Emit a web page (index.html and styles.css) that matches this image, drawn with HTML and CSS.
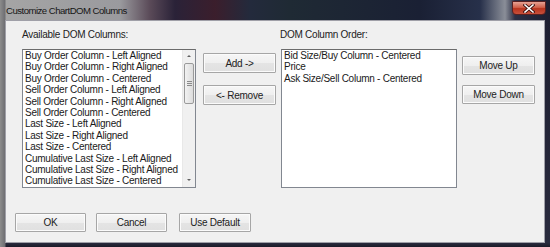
FILE: index.html
```html
<!DOCTYPE html>
<html>
<head>
<meta charset="utf-8">
<link rel="stylesheet" href="styles.css">
</head>
<body>
<div class="window">
  <div class="titlebar">
    <span class="title">Customize ChartDOM Columns</span>
    <div class="close"><svg width="12" height="9" viewBox="0 0 12 9"><path d="M2 1 L10 8 M10 1 L2 8" stroke="#3a1010" stroke-width="3.2" stroke-linecap="square"/><path d="M2 1 L10 8 M10 1 L2 8" stroke="#ffffff" stroke-width="1.6" stroke-linecap="square"/></svg></div>
  </div>
  <div class="client">
    <div class="top">
      <div class="col">
        <div class="label">Available DOM Columns:</div>
        <div class="listbox">
          <ul class="items">
            <li>Buy Order Column - Left Aligned</li>
            <li>Buy Order Column - Right Aligned</li>
            <li>Buy Order Column - Centered</li>
            <li>Sell Order Column - Left Aligned</li>
            <li>Sell Order Column - Right Aligned</li>
            <li>Sell Order Column - Centered</li>
            <li>Last Size - Left Aligned</li>
            <li>Last Size - Right Aligned</li>
            <li>Last Size - Centered</li>
            <li>Cumulative Last Size - Left Aligned</li>
            <li>Cumulative Last Size - Right Aligned</li>
            <li>Cumulative Last Size - Centered</li>
          </ul>
          <div class="scrollbar">
            <div class="arrow up"></div>
            <div class="track"><div class="thumb"><span class="grip"></span></div></div>
            <div class="arrow down"></div>
          </div>
        </div>
      </div>
      <div class="mid">
        <button class="btn">Add -&gt;</button>
        <button class="btn">&lt;- Remove</button>
      </div>
      <div class="col col-right">
        <div class="label">DOM Column Order:</div>
        <div class="listbox wide">
          <ul class="items">
            <li>Bid Size/Buy Column - Centered</li>
            <li>Price</li>
            <li>Ask Size/Sell Column - Centered</li>
          </ul>
        </div>
      </div>
      <div class="side">
        <button class="btn small">Move Up</button>
        <button class="btn small">Move Down</button>
      </div>
    </div>
    <div class="bottom">
      <button class="btn small w71">OK</button>
      <button class="btn small w71">Cancel</button>
      <button class="btn small w72">Use Default</button>
    </div>
  </div>
</div>
</body>
</html>
```

FILE: styles.css
```css
html, body {
  margin: 0;
  padding: 0;
  background: #1c1d2e;
}
.window {
  width: 550px;
  height: 247px;
  box-sizing: border-box;
  padding: 0 5px 4px 5px;
  background:
    linear-gradient(90deg, #8c8c8c 0px, #6e6e72 5px, transparent 6px),
    linear-gradient(180deg, transparent 0px, transparent 20px, #2a2b3e 243px, #1b1b28 247px),
    linear-gradient(90deg, #a5a5a5 0px, #9a9a9e 120px, #5a4a58 150px, #2a2238 175px, #3b1e2c 215px, #232a3c 250px, #1f2a34 290px, #1a2034 420px, #27304a 480px, #8a8e98 505px, #2c2f45 515px, #1d1e30 550px);
  font-family: "Liberation Sans", Arial, sans-serif;
}
.titlebar {
  height: 20px;
  display: flex;
  align-items: flex-start;
  justify-content: space-between;
  margin: 0 -1px 0 1px;
}
.title {
  font-family: "Liberation Sans", Arial, sans-serif;
  font-size: 9.6px;
  line-height: 21px;
  color: #161616;
  letter-spacing: -0.52px;
}
.close {
  margin-top: 1px;
  width: 34px;
  height: 14px;
  box-sizing: border-box;
  border: 1px solid #5a2020;
  border-radius: 0 0 4px 4px;
  background: linear-gradient(180deg, #e6a294 0%, #d0604a 45%, #b8341e 55%, #c8503c 100%);
  display: flex;
  align-items: center;
  justify-content: center;
}
.client {
  height: 223px;
  box-sizing: border-box;
  background: #f0f0f0;
  border: 1px solid #a0a0a8;
  padding: 8px 0 0 16px;
  font-size: 10px;
  letter-spacing: -0.25px;
  color: #000;
}
.top {
  display: flex;
  align-items: flex-start;
}
.label {
  height: 12px;
  line-height: 12px;
  margin-bottom: 8px;
  font-size: 10px;
  color: #222;
}
.col-right .label {
  margin-left: -1px;
}
.listbox {
  width: 174px;
  height: 139px;
  box-sizing: border-box;
  border: 1px solid #828790;
  border-top-color: #6b6b6b;
  background: #fff;
  display: flex;
  overflow: hidden;
}
.listbox.wide {
  width: 176px;
}
.items {
  list-style: none;
  margin: 0;
  padding: 0 0 0 2px;
  flex: 1;
  min-width: 0;
  overflow: hidden;
}
.items li {
  height: 11.4px;
  line-height: 11.4px;
  font-size: 10px;
  white-space: nowrap;
  color: #1a1a1a;
}
.scrollbar {
  width: 12px;
  flex-shrink: 0;
  display: flex;
  flex-direction: column;
  background: #f0f0f0;
  border-left: 1px solid #e8e8e8;
}
.arrow {
  height: 12px;
  position: relative;
}
.arrow::after {
  content: "";
  position: absolute;
  left: 4px;
  top: 5px;
  border-left: 2px solid transparent;
  border-right: 2px solid transparent;
}
.arrow.up::after { border-bottom: 2px solid #606060; }
.arrow.down::after { border-top: 2px solid #606060; top: 4px; }
.track {
  flex: 1;
}
.thumb {
  margin: 1px 1px 0 1px;
  height: 41px;
  box-sizing: border-box;
  border: 1px solid #9a9a9a;
  border-radius: 2px;
  background: linear-gradient(90deg, #f2f2f2, #dcdcdc);
  display: flex;
  align-items: center;
  justify-content: center;
}
.grip {
  width: 5px;
  height: 5px;
  background: repeating-linear-gradient(180deg, #8a8a8a 0 1px, transparent 1px 2px);
}
.mid {
  display: flex;
  flex-direction: column;
  gap: 12px;
  margin-left: 7px;
  padding-top: 24px;
}
.col-right {
  margin-left: 5px;
}
.side {
  display: flex;
  flex-direction: column;
  gap: 10px;
  margin-left: 5px;
  padding-top: 27px;
}
.btn {
  width: 73px;
  height: 20px;
  box-sizing: border-box;
  margin: 0;
  padding: 0;
  border: 1px solid #a6a6a6;
  border-radius: 1px;
  background: linear-gradient(180deg, #f6f6f6 0%, #efefef 50%, #e4e4e4 51%, #e0e0e0 100%);
  font-family: "Liberation Sans", Arial, sans-serif;
  font-size: 10px;
  letter-spacing: -0.25px;
  color: #222;
  box-shadow: inset 0 0 0 1px #fbfbfb;
}
.btn.small {
  height: 19px;
}
.bottom {
  display: flex;
  margin-top: 25px;
  margin-left: -7px;
}
.w71 { width: 71px; margin-right: 10px; }
.w72 { width: 72px; margin-left: 2px; }
```
